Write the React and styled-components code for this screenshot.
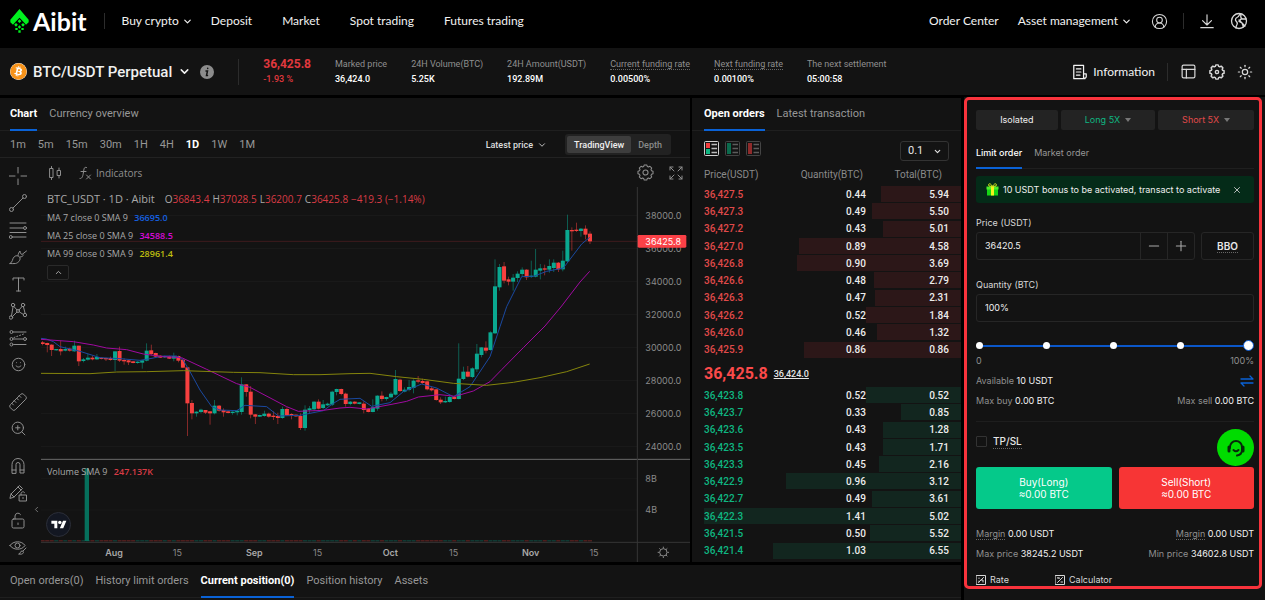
import React, { useState } from 'react';
import styled, { createGlobalStyle, css } from 'styled-components';
import {
  ChevronDown,
  ChevronUp,
  ChevronLeft,
  CircleUserRound,
  Minus,
  PanelsTopLeft,
  Plus,
  Ruler,
  Smile,
  Sun,
  X,
  ZoomIn,
} from 'lucide-react';
import { FaBitcoin } from 'react-icons/fa';

const GlobalStyle = createGlobalStyle`
  * {
    box-sizing: border-box;
  }
  body {
    margin: 0;
    background: #000;
    color: #e6e6e6;
    font: 11px/14px Roboto, "Liberation Sans", sans-serif;
    overflow: hidden;
  }
  button, input, select {
    font: inherit;
    color: inherit;
    background: none;
    border: 0;
    margin: 0;
    padding: 0;
  }
  button {
    cursor: pointer;
  }
  a {
    color: inherit;
    text-decoration: none;
  }
  svg {
    display: block;
    flex: none;
  }
`;

/* ---------- data ---------- */

const TICKER = [
  { label: 'Marked price', value: '36,424.0' },
  { label: '24H Volume(BTC)', value: '5.25K' },
  { label: '24H Amount(USDT)', value: '192.89M' },
  { label: 'Current funding rate', value: '0.00500%', hint: true },
  { label: 'Next funding rate', value: '0.00100%', hint: true },
  { label: 'The next settlement', value: '05:00:58' },
];

const INTERVALS = ['1m', '5m', '15m', '30m', '1H', '4H', '1D', '1W', '1M'];

const ASKS = [
  ['36,427.5', '0.44', '5.94'],
  ['36,427.3', '0.49', '5.50'],
  ['36,427.2', '0.43', '5.01'],
  ['36,427.0', '0.89', '4.58'],
  ['36,426.8', '0.90', '3.69'],
  ['36,426.6', '0.48', '2.79'],
  ['36,426.3', '0.47', '2.31'],
  ['36,426.2', '0.52', '1.84'],
  ['36,426.0', '0.46', '1.32'],
  ['36,425.9', '0.86', '0.86'],
];

const BIDS = [
  ['36,423.8', '0.52', '0.52'],
  ['36,423.7', '0.33', '0.85'],
  ['36,423.6', '0.43', '1.28'],
  ['36,423.5', '0.43', '1.71'],
  ['36,423.3', '0.45', '2.16'],
  ['36,422.9', '0.96', '3.12'],
  ['36,422.7', '0.49', '3.61'],
  ['36,422.3', '1.41', '5.02'],
  ['36,421.5', '0.50', '5.52'],
  ['36,421.4', '1.03', '6.55'],
];

const MAX_QTY = 1.41;

// one entry a day: direction, body top, body bottom, wick top, wick bottom
const CANDLES = `
r428,432,423,436 r430,435,428,457 r435,450,433,468 g448,450,447,452 r448,454,422,466 g448,452,440,454
r447,452,443,455 g438,454,422,455 r438,484,437,498 g479,483,474,487 g474,479,462,482 r474,478,468,481
g472,478,462,480 r474,477,472,478 r475,478,473,483 r475,480,470,482 g455,480,454,513 r454,482,440,486
r481,483,475,494 r482,487,480,495 r485,489,483,490 g486,489,484,491 g482,488,480,506 g453,482,430,484
r452,462,434,466 r460,470,458,473 r468,473,466,474 g469,472,467,474 r470,476,467,477 g469,476,458,484
r469,482,467,487 r480,503,478,504 r503,610,502,708 r610,640,600,658 g636,640,634,650 g630,636,626,640
r631,638,630,642 r635,640,633,674 g618,640,600,643 r618,632,615,635 r631,637,625,650 r635,639,632,640
g636,639,634,644 g633,637,630,646 g554,636,532,644 r554,576,552,590 r576,644,558,655 r644,650,642,672
g646,650,644,651 g642,648,632,650 r642,650,638,653 r648,651,634,660 r649,654,638,672 g628,654,620,656
r628,646,622,648 r643,646,640,658 r645,649,643,651 r649,684,640,690 g630,684,616,692 g626,630,618,640
g606,628,604,634 r606,626,598,628 g614,624,600,628 g612,616,608,618 g576,614,572,618 g568,576,566,586
r568,582,566,586 r582,612,578,620 g606,612,603,616 r606,611,604,613 g608,612,607,613 r612,630,604,640
r627,636,624,637 g623,636,598,637 g588,626,586,632 r588,597,574,604 g592,597,590,602 g582,592,576,594
g538,584,510,586 r540,573,536,576 g570,575,562,577 g562,570,540,574 g543,564,538,580 r542,545,528,550
r544,549,536,552 r545,568,542,571 r566,571,560,574 r569,600,566,602 r600,607,592,612 g604,607,590,609
g592,606,586,608 r592,597,589,598 g537,597,430,598 g516,537,500,540 r516,530,498,532 g506,531,502,534
g462,508,432,516 g443,465,442,472 r444,452,424,460 g398,450,394,452 g260,400,178,402 g202,262,192,272
r200,242,186,250 r239,245,230,256 g234,245,222,272 g222,234,214,246 g210,222,202,230 r210,232,208,240
g228,231,182,234 g210,230,147,232 g206,212,192,238 r206,209,194,226 g199,209,178,218 g189,204,178,216
r189,208,186,216 g183,208,152,214 g91,184,44,186 r91,93,82,152 r90,93,68,96 g87,93,84,110
r87,104,76,118 r102,124,94,132`
  .trim()
  .split(/\s+/)
  .map((item) => ({ up: item[0] === 'g', v: item.slice(1).split(',').map(Number) }));

const MA7 =
  '0,415 16,417 37,425 57,440 117,454 177,473 237,476 297,481 327,476 367,468 407,468 425,478 447,515 477,570 512,620 537,630 587,632 612,616 677,620 712,648 777,646 847,632 877,610 897,598 957,595 992,619 1047,608 1087,575 1142,552 1187,564 1237,590 1287,560 1347,470 1377,380 1397,320 1442,230 1477,229 1517,214 1567,204 1587,178 1622,132 1646,112';
const MA25 =
  '0,418 97,425 157,435 197,444 257,449 307,462 367,470 422,473 497,508 587,551 627,562 737,620 772,634 847,631 897,624 927,622 977,627 1047,614 1097,604 1132,591 1197,584 1242,589 1297,573 1347,545 1382,509 1447,443 1512,378 1562,318 1617,246 1646,214';
const MA99 =
  '0,520 147,521 227,516 317,515 427,512 577,517 657,518 757,524 837,524 927,521 987,520 1067,530 1147,538 1237,550 1337,556 1417,547 1497,533 1577,515 1646,492';

const PRICE_TICKS = [38000, 36000, 34000, 32000, 30000, 28000, 26000, 24000];
const TIME_TICKS = [
  ['Aug', 219, true],
  ['15', 409],
  ['Sep', 640, true],
  ['15', 830],
  ['Oct', 1048, true],
  ['15', 1238],
  ['Nov', 1469, true],
  ['15', 1659],
];

/* ---------- header ---------- */

const Header = styled.header`
  display: flex;
  align-items: center;
  height: 42px;
  padding: 0 17px 0 10px;
  font: 12px/16px Lato, "Liberation Sans", sans-serif;
  color: #f2f2f2;
`;

const Brand = styled.a`
  display: flex;
  align-items: center;
  gap: 4px;
  font-size: 25px;
  line-height: 24px;
  font-weight: 700;
  color: #fff;
`;

const Divider = styled.span`
  width: 1px;
  height: ${(p) => p.$h || 16}px;
  margin: 0 ${(p) => p.$gap || 16}px;
  background: #2c2c2c;
`;

const Nav = styled.nav`
  display: flex;
  align-items: center;
  gap: ${(p) => p.$gap}px;
`;

const NavLink = styled.a`
  display: flex;
  align-items: center;
  gap: 3px;
  margin-right: ${(p) => (p.$menu ? -12 : 0)}px;
  white-space: nowrap;
`;

const Spacer = styled.span`
  flex: 1;
`;

const IconButton = styled.button`
  display: flex;
  align-items: center;
  justify-content: center;
  color: ${(p) => p.$color || '#d8d8d8'};
`;

const Icons = styled.div`
  display: flex;
  align-items: center;
  gap: ${(p) => p.$gap}px;
`;

/* ---------- ticker ---------- */

const Ticker = styled.section`
  display: flex;
  align-items: center;
  height: 47px;
  margin: 6px 0 2px;
  padding: 0 12px 0 10px;
  background: #131313;
`;

const Pair = styled.button`
  display: flex;
  align-items: center;
  gap: 6px;
  margin-right: 9px;
  font-size: 15px;
  line-height: 18px;
  font-weight: 500;
  color: #f0f0f0;
  white-space: nowrap;
`;

const Stats = styled.dl`
  display: flex;
  gap: 24px;
  margin: 0;
`;

const Stat = styled.div`
  font-size: 9px;
  line-height: 15px;
  white-space: nowrap;

  dt {
    color: #8f8f8f;
  }
  dt span {
    ${(p) => p.$hint && css`border-bottom: 1px dotted #666;`}
  }
  dd {
    margin: 0;
    font-weight: 500;
    color: #fff;
  }
`;

const LastPrice = styled(Stat)`
  dt {
    font-size: 12px;
    font-weight: 700;
  }
  dt,
  dd {
    color: #e0383e;
  }
`;

const InfoLink = styled.a`
  display: flex;
  align-items: center;
  gap: 5px;
  font: 12px/16px Lato, "Liberation Sans", sans-serif;
  color: #f2f2f2;
`;

/* ---------- page grid ---------- */

const Main = styled.main`
  display: grid;
  grid-template-columns: minmax(0, 1fr) 301px;
  gap: 3px;
`;

const Left = styled.div`
  display: grid;
  grid-template-columns: minmax(0, 1fr) 269px;
  gap: 3px 2px;
  padding-top: 1px;
`;

const Panel = styled.section`
  background: #131313;
  min-width: 0;
`;

const Tabs = styled.div`
  display: flex;
  gap: 12px;
  height: 33px;
  padding: 0 ${(p) => p.$pad}px;
  border-bottom: 1px solid #1f1f1f;
`;

const FormTabs = styled(Tabs)`
  height: 39px;
  padding: 8px 0 0;
`;

const Tab = styled.button`
  margin-bottom: -1px;
  padding: 0;
  border-bottom: 2px solid ${(p) => (p.$on ? '#0a62d6' : 'transparent')};
  color: ${(p) => (p.$on ? '#fff' : '#979797')};
  font-weight: ${(p) => (p.$on ? 700 : 400)};
  white-space: nowrap;
`;

const FormTab = styled(Tab)`
  font-weight: ${(p) => (p.$on ? 500 : 400)};
`;

/* ---------- chart ---------- */

const IntervalBar = styled.div`
  display: flex;
  align-items: center;
  gap: 12px;
  height: 27px;
  padding: 1px 19px 0 10px;
  border-bottom: 1px solid #222;
`;

const Interval = styled.button`
  color: ${(p) => (p.$on ? '#fff' : '#979797')};
  font-weight: ${(p) => (p.$on ? 700 : 400)};
`;

const PriceKind = styled.button`
  display: flex;
  align-items: center;
  gap: 4px;
  margin-right: 6px;
  font-size: 9px;
  font-weight: 500;
  color: #ddd;
`;

const Segments = styled.div`
  display: flex;
  padding: 2px;
  border-radius: 3px;
  background: #222;
`;

const Segment = styled.button`
  height: 17px;
  padding: 0 7px;
  border-radius: 2px;
  font-size: 9px;
  font-weight: 500;
  background: ${(p) => (p.$on ? '#3d3d3d' : 'none')};
  color: ${(p) => (p.$on ? '#f0f0f0' : '#8a8a8a')};
`;

const Workspace = styled.div`
  display: grid;
  grid-template-columns: 41px minmax(0, 1fr);
`;

const Tools = styled.div`
  display: flex;
  flex-direction: column;
  padding: 4px 4px 0 4px;
`;

const Tool = styled(IconButton)`
  height: 27px;
  width: 28px;
  margin-top: ${(p) => (p.$gap ? 10 : 0)}px;
  color: #8f8f8f;
`;

const Flip = styled.span`
  transform: scaleX(-1);
`;

const ChartHead = styled.div`
  display: flex;
  align-items: center;
  gap: 15px;
  height: 29px;
  padding: 0 7px 0 8px;
  color: #8f8f8f;
`;

const IndicatorButton = styled.button`
  display: flex;
  align-items: center;
  gap: 4px;
  font: 10px/14px "Open Sans", sans-serif;
`;

const Plot = styled.div`
  position: relative;

  > svg {
    width: 100%;
    height: auto;
    font-family: Inter, "Liberation Sans", sans-serif;
  }
`;

const Legend = styled.div`
  position: absolute;
  left: 6px;
  top: 3px;
  font: 9px/18px "Open Sans", "Noto Sans", sans-serif;
  color: #a8a8a8;
  white-space: nowrap;

  h2 {
    display: inline;
    margin: 0 10px 0 0;
    font-size: 11px;
    font-weight: 400;
  }
  p {
    margin: 0;
  }
`;

const VolumeLegend = styled(Legend)`
  top: 276px;
`;

const Value = styled.span`
  margin-left: 4px;
  font-weight: 600;
  color: ${(p) => p.$color};
`;

const Ohlc = styled.span`
  margin-right: 3px;
  font-size: 10px;

  b {
    font-weight: 400;
    color: #d93b45;
  }
`;

const Collapse = styled.button`
  display: flex;
  align-items: center;
  justify-content: center;
  width: 22px;
  height: 15px;
  margin-top: 2px;
  border: 1px solid #2a2a2a;
  border-radius: 2px;
`;

const TvMark = styled.a`
  position: absolute;
  left: 5px;
  bottom: 25px;
  display: flex;
  align-items: center;
  justify-content: center;
  width: 25px;
  height: 25px;
  border: 1px solid #2b2e38;
  border-radius: 50%;
  background: #131722;
`;

const Drawer = styled(IconButton)`
  position: absolute;
  left: -9px;
  bottom: 48px;
`;

/* ---------- order book ---------- */

const BookBar = styled.div`
  display: flex;
  align-items: flex-start;
  gap: 6px;
  padding: 10px 12px 3px;
`;

const SelectBox = styled.label`
  display: flex;
  align-items: center;
  width: 49px;
  height: 20px;
  padding: 0 6px 0 7px;
  border: 1px solid #333;
  border-radius: 3px;

  select {
    flex: 1;
    min-width: 0;
    appearance: none;
    outline: 0;
  }
`;

const BookTable = styled.table`
  width: calc(100% - 12px);
  height: ${(p) => p.$h}px;
  margin-left: 12px;
  border-collapse: collapse;
  table-layout: fixed;
  font-size: 10px;
  line-height: 12px;

  th,
  td {
    padding: 0;
    text-align: right;
  }
  th {
    height: 22px;
    font-weight: 400;
    color: #8a8a8a;
  }
  td {
    font-weight: 500;
    color: #ececec;
  }
  th:first-child,
  td:first-child {
    text-align: left;
  }
  td:first-child {
    color: ${(p) => (p.$side === 'ask' ? '#e04a4a' : '#0fb681')};
  }
  th:nth-child(2) {
    padding-right: 3px;
  }
  th:last-child {
    padding-right: 19px;
  }
  td:last-child {
    padding-right: 12px;
  }
  tbody tr {
    background-repeat: no-repeat;
    background-position: right top;
    background-image: linear-gradient(
      ${(p) => (p.$side === 'ask' ? '#2c1718, #2c1718' : '#12261f, #12261f')}
    );
  }
`;

const MidPrice = styled.div`
  display: flex;
  align-items: center;
  gap: 6px;
  height: 28px;
  padding: 2px 12px 0;
  font-size: 9px;
  font-weight: 500;

  strong {
    font-size: 16px;
    color: #fb4a4a;
  }
  u {
    text-underline-offset: 1px;
  }
`;

/* ---------- order form ---------- */

const FormColumn = styled.div`
  background: #131313;
`;

const OrderForm = styled.form`
  margin-right: 3px;
  padding: 10px 5px 0 9px;
  height: 492px;
  border: 3px solid #f8333c;
  border-radius: 5px;
  font: 9px/14px Inter, "Liberation Sans", sans-serif;
`;

const Modes = styled.div`
  display: grid;
  grid-template-columns: 82fr 95fr 96fr;
  gap: 3px;
`;

const Mode = styled.button`
  display: flex;
  align-items: center;
  justify-content: center;
  gap: 5px;
  height: 20px;
  border-radius: 2px;
  background: #232323;
  color: ${(p) => p.$color};
`;

const Caret = styled.i`
  border: 3px solid transparent;
  border-top: 4px solid #777;
  border-bottom: 0;
`;

const Banner = styled.div`
  display: flex;
  align-items: center;
  gap: 4px;
  height: 27px;
  margin: 7px 0 13px;
  padding: 0 12px 0 10px;
  border-radius: 3px;
  background: #042b18;
  color: #eee;
  white-space: nowrap;
`;

const FieldLabel = styled.label`
  display: block;
  margin-bottom: 2px;
  color: #d8d8d8;
`;

const FieldRow = styled.div`
  display: flex;
  gap: 6px;
  margin-bottom: 18px;
`;

const Field = styled.div`
  display: flex;
  flex: 1;
  min-width: 0;
  height: 28px;
  border: 1px solid #262626;
  border-radius: 3px;

  input {
    flex: 1;
    min-width: 0;
    padding: 0 8px;
    outline: 0;
    color: #eee;
  }
`;

const Step = styled(IconButton)`
  width: 27px;
  border-left: 1px solid #262626;
  color: #aaa;
`;

const Bbo = styled.button`
  width: 53px;
  border: 1px solid #262626;
  border-radius: 3px;
  font-size: 10px;
  font-weight: 600;
`;

const Dotted = styled.span`
  border-bottom: 1px dotted #666;
`;

const SliderBox = styled.div`
  position: relative;
  height: 11px;

  input {
    display: block;
    width: 100%;
    height: 11px;
    appearance: none;
    background: linear-gradient(#0b57c9, #0b57c9) center / calc(100% - 6px) 2px no-repeat;
  }
  input::-webkit-slider-thumb {
    position: relative;
    z-index: 2;
    appearance: none;
    width: 11px;
    height: 11px;
    border: 1px solid #0b57c9;
    border-radius: 50%;
    background: #fff;
  }
`;

const Marks = styled.div`
  position: absolute;
  inset: 0 3px 0 0;
  display: flex;
  align-items: center;
  justify-content: space-between;
  pointer-events: none;

  i {
    width: 7px;
    height: 7px;
    border-radius: 50%;
    background: #fff;
  }
`;

const Line = styled.div`
  display: flex;
  align-items: center;
  justify-content: space-between;
  height: 20px;
  color: #8f8f8f;
  white-space: nowrap;

  b {
    font-weight: 400;
    color: #f2f2f2;
  }
`;

const Check = styled.label`
  display: flex;
  align-items: center;
  gap: 6px;
  height: 40px;
  margin-top: 10px;
  border-top: 1px solid #1e1e1e;
  font-size: 10px;
  font-weight: 500;

  input {
    appearance: none;
    width: 11px;
    height: 11px;
    border: 1px solid #333;
    border-radius: 1px;
  }
`;

const Actions = styled.div`
  display: grid;
  grid-template-columns: 1fr 1fr;
  gap: 7px;
  margin: 6px 0 15px;
`;

const Action = styled.button`
  height: 42px;
  border-radius: 3px;
  background: ${(p) => p.$bg};
  color: #fff;
  font-size: 10px;
  line-height: 12px;
`;

const FootLinks = styled.div`
  display: grid;
  grid-template-columns: 79px 1fr;
  margin-top: 9px;
  color: #d8d8d8;

  a {
    display: flex;
    align-items: center;
    gap: 4px;
  }
`;

const Support = styled.button`
  position: fixed;
  right: 11px;
  bottom: 134px;
  display: flex;
  align-items: center;
  justify-content: center;
  width: 37px;
  height: 37px;
  border-radius: 50%;
  background: #00dc00;
`;

const Positions = styled(Panel)`
  grid-column: 1 / -1;
  height: 60px;
`;

/* ---------- icons ---------- */

function Glyph({ size = 18, sw = 1, children, box = 18 }) {
  return (
    <svg
      width={size}
      height={size}
      viewBox={`0 0 ${box} ${box}`}
      fill="none"
      stroke="currentColor"
      strokeWidth={sw}
      strokeLinecap="round"
      strokeLinejoin="round"
      aria-hidden="true"
    >
      {children}
    </svg>
  );
}

function Logo() {
  return (
    <svg width="19" height="24" viewBox="0 0 57 72" fill="#00f01e" aria-hidden="true">
      <path d="M28.500 0 56 32v8l-8 7-8-9-11.500-12L17 38l-8 9-8-7v-8z" />
      <path d="M28.500 31l5.500 5.500-5.500 5.500-5.500-5.500zM18 42l5.500 5.500-5.500 5.500-5.500-5.500zM39 42l5.500 5.500-5.500 5.500-5.500-5.500zM28.500 49l5 5-5 5-5-5z" />
      <path d="M16 57h7v6h-7zM34 57h7v6h-7zM25 64h7v7h-7z" />
    </svg>
  );
}

const TOOLS = [
  { name: 'Cross', icon: <Glyph><path d="M9 0v6M9 12v6M0 9h6M12 9h6" /></Glyph> },
  { name: 'Trend line', icon: <Glyph><circle cx="2.500" cy="15.500" r="2" /><circle cx="15.500" cy="2.500" r="2" /><path d="M4 14 14 4" /></Glyph> },
  { name: 'Fib retracement', icon: <Glyph><path d="M1 2h16M1 7h13M1 11.500h16M4 16h13" /><circle cx="16" cy="7" r="1.500" /><circle cx="1.800" cy="16" r="1.500" /></Glyph> },
  { name: 'Brush', icon: <Glyph><path d="M1 15.500c3-1 2-5 4.500-7 2-1.500 5-.5 5.500 1.500.5 2.500-2 5-4.500 5.500-2 .3-4 0-5.500 0z" /><path d="M9 7.500c0-2 1-3 2-4.500 0 1.500.5 3 2 3.500L17.500 3M11 9c2 0 3-1 3.500-2" /></Glyph> },
  { name: 'Text', icon: <Glyph><path d="M4 5V3h11v2M9.500 3v13M7.500 16h4" /></Glyph> },
  { name: 'Patterns', icon: <Glyph><circle cx="4" cy="3" r="1.700" /><circle cx="14" cy="3" r="1.700" /><circle cx="2" cy="15.500" r="1.700" /><circle cx="16" cy="13" r="1.700" /><circle cx="9" cy="9" r="1.500" /><path d="M4 5 2.500 14M5 4.500 8 8M13 4.500 10 8M14.500 5 16 11M3.500 14.500 8 10M10.500 10l4 2.500" /></Glyph> },
  { name: 'Position', icon: <Glyph><circle cx="2.500" cy="3" r="1.500" /><path d="M5 3h12M5 10h9M5 15.500h12" /><circle cx="2.500" cy="10" r="1.500" /><circle cx="16" cy="10" r="1.500" /><circle cx="2.500" cy="15.500" r="1.500" /><path d="M5 8.500l11-4" strokeDasharray="1 2" /></Glyph> },
  { name: 'Icons', icon: <Smile size={15} strokeWidth={1.6} /> },
  { name: 'Measure', gap: true, icon: <Flip><Ruler size={20} strokeWidth={1.2} /></Flip> },
  { name: 'Zoom in', icon: <ZoomIn size={17} strokeWidth={1.4} /> },
  { name: 'Magnet', gap: true, icon: <Glyph><path d="M3 16V7.500a6 6 0 0 1 12 0V16h-4V7.500a2 2 0 0 0-4 0V16zM3 13h4M11 13h4" /></Glyph> },
  { name: 'Stay in drawing mode', icon: <Glyph><path d="M1 14l1-4 8.500-8.500 3 3L5 13zM2 10l3 3M9 3l3 3" /><path d="M10.500 11h7v6h-7zM12 11V9.500a2 2 0 0 1 3.500-1M14 13.500v1" /></Glyph> },
  { name: 'Lock', icon: <Glyph><rect x="3" y="8" width="12" height="9" rx="1.500" /><path d="M6 8V5a3 3 0 0 1 5.500-1.500M9 12v1.500" /></Glyph> },
  { name: 'Hide', icon: <Glyph><path d="M1 7.500C4 2.500 13 2.500 16 7.500 13 12.500 4 12.500 1 7.500z" /><circle cx="8.500" cy="7.500" r="2.500" /><path d="M10 16c2-.5 1-3 3-3s2 2.500 0 3zM14 13l3-3" /></Glyph> },
];

function Cog({ size, teeth = 8, r = 3, sw = 1.2 }) {
  const pts = [];
  for (let i = 0; i < teeth; i++) {
    [[-0.3, 7.3], [-0.17, 9], [0.17, 9], [0.3, 7.3]].forEach(([da, rad]) => {
      const a = (i / teeth) * Math.PI * 2 + da;
      pts.push(`${(10 + Math.sin(a) * rad).toFixed(2)},${(10 - Math.cos(a) * rad).toFixed(2)}`);
    });
  }
  return (
    <Glyph size={size} box={20} sw={sw}>
      <polygon points={pts.join(' ')} />
      <circle cx="10" cy="10" r={r} />
    </Glyph>
  );
}

function BookIcon({ left, on }) {
  return (
    <svg width="15" height="15" viewBox="0 0 15 15" aria-hidden="true">
      <rect x=".5" y=".5" width="14" height="14" rx="1" fill="none" stroke={on ? '#d0d0d0' : '#444'} />
      <rect x="2" y="2" width="4" height="5" fill={left[0]} />
      <rect x="2" y={on ? 8 : 7} width="4" height={on ? 5 : 6} fill={left[1]} />
      <path d="M7.500 3.500H13M7.500 7.500H13M7.500 11.500H13" stroke={on ? '#bbb' : '#5c5c5c'} strokeWidth="1.500" />
    </svg>
  );
}

function Gift() {
  return (
    <svg width="13" height="13" viewBox="0 0 26 26" aria-hidden="true">
      <path d="M2 12h22v13H2z" fill="#16d416" />
      <path d="M1 7h24v6H1z" fill="#4cf02a" />
      <path d="M10 7h6v18h-6z" fill="#f2f21c" />
      <path d="M13 7C9-1 3 1 6 6zM13 7c4-8 10-6 7-1z" fill="none" stroke="#d8f21c" strokeWidth="2" />
    </svg>
  );
}

/* ---------- sections ---------- */

function TopBar() {
  return (
    <Header>
      <Brand href="#">
        <Logo />
        Aibit
      </Brand>
      <Divider $gap={17} />
      <Nav $gap={30}>
        <NavLink href="#" $menu>Buy crypto <ChevronDown size={11} strokeWidth={2.6} /></NavLink>
        <NavLink href="#">Deposit</NavLink>
        <NavLink href="#">Market</NavLink>
        <NavLink href="#">Spot trading</NavLink>
        <NavLink href="#">Futures trading</NavLink>
      </Nav>
      <Spacer />
      <Nav $gap={19}>
        <NavLink href="#">Order Center</NavLink>
        <NavLink href="#">Asset management <ChevronDown size={11} strokeWidth={2.6} /></NavLink>
        <IconButton type="button" aria-label="Account"><CircleUserRound size={17} strokeWidth={1.5} /></IconButton>
      </Nav>
      <Divider $gap={15} />
      <Icons $gap={15}>
        <IconButton type="button" aria-label="Download">
          <Glyph size={16} sw={1.3}><path d="M9 2v11M4 8.500l5 5 5-5M2 16.500h14" /></Glyph>
        </IconButton>
        <IconButton type="button" aria-label="Language">
          <Glyph size={18} sw={1.3}><circle cx="9" cy="9" r="7.500" /><path d="M10 2c-1 2-1.500 3-3 3.500S5 8 6 9s2 2 1 3.500-1 2-1 3.500M11 2.500c-.5 2-.5 3.500 1 4M16 7l-5 0-2 2.500 3 1.500 1.500 4M9 8l6 6" /></Glyph>
        </IconButton>
      </Icons>
    </Header>
  );
}

function TickerBar() {
  return (
    <Ticker>
      <Pair type="button">
        <FaBitcoin size={17} color="#f7931a" style={{ background: '#fff', borderRadius: '50%' }} />
        BTC/USDT Perpetual
        <ChevronDown size={13} strokeWidth={2.8} />
      </Pair>
      <svg width="14" height="14" viewBox="0 0 14 14" aria-label="Contract info">
        <circle cx="7" cy="7" r="7" fill="#8c8c8c" />
        <path d="M6 6h1.500l-1 4.500h1M7.700 3.300v.3" stroke="#131313" strokeWidth="1.500" fill="none" strokeLinecap="round" />
      </svg>
      <Divider $h={26} $gap={24} />
      <Stats>
        <LastPrice>
          <dt>36,425.8</dt>
          <dd>-1.93 %</dd>
        </LastPrice>
        {TICKER.map((s) => (
          <Stat key={s.label} $hint={s.hint}>
            <dt><span>{s.label}</span></dt>
            <dd>{s.value}</dd>
          </Stat>
        ))}
      </Stats>
      <Spacer />
      <InfoLink href="#">
        <Glyph size={16} sw={1.4}><path d="M13 11V1.500H2v15h12.500M5 5.500h5M5 9h5M5 12.500h4M13 11h3v3.500a1.800 1.800 0 0 1-3 1z" /></Glyph>
        Information
      </InfoLink>
      <Divider $h={18} $gap={12} />
      <Icons $gap={12}>
        <IconButton type="button" aria-label="Layout"><PanelsTopLeft size={17} strokeWidth={1.7} /></IconButton>
        <IconButton type="button" aria-label="Settings"><Cog size={16} teeth={8} r={2} sw={1.8} /></IconButton>
        <IconButton type="button" aria-label="Theme"><Sun size={16} strokeWidth={1.8} /></IconButton>
      </Icons>
    </Ticker>
  );
}

function CandleChart() {
  return (
    <svg viewBox="0 0 1947 1125" role="img" aria-label="BTC_USDT daily candles">
      <g transform="translate(0 39)">
        {PRICE_TICKS.map((p, i) => (
          <g key={p}>
            <path d={`M0 ${46 + i * 99}H1789`} stroke="#1b1b1b" strokeWidth="3" />
            <text x="1813" y={56 + i * 99} fontSize="27" fill="#8a8a8a">{p}.0</text>
          </g>
        ))}
        {[['8B', 836], ['4B', 930]].map(([label, y]) => (
          <g key={label}>
            <path d={`M0 ${y}H1789`} stroke="#181818" strokeWidth="3" />
            <text x="1813" y={y + 10} fontSize="27" fill="#8a8a8a">{label}</text>
          </g>
        ))}
        <path d="M0 124H1789" stroke="#3f1b1e" strokeWidth="3" />
        {CANDLES.map(({ up, v }, i) => {
          const x = 5 + i * 13.57;
          return (
            <g key={i} fill={up ? '#0aa890' : '#f7403f'}>
              <rect x={x - 1} y={v[2]} width="2" height={v[3] - v[2]} opacity=".75" />
              <rect x={x - 6} y={v[0] - 1} width="12" height={Math.max(v[1] - v[0], 3) + 1} />
              <rect x={x - 6} y="1021" width="12" height="3" opacity=".4" />
            </g>
          );
        })}
        <rect x="131" y="805" width="13" height="218" fill="#06705c" />
        <g fill="none" strokeWidth="3">
          <polyline points={MA7} stroke="#1a49a0" />
          <polyline points={MA25} stroke="#a00aa0" />
          <polyline points={MA99} stroke="#85850c" />
        </g>
        <path d="M0 778H1947" stroke="#6a6a6a" strokeWidth="3" />
        <path d="M0 1027H1947M1789-39V1086" stroke="#363636" strokeWidth="3" />
        <rect x="1790" y="105" width="146" height="38" rx="4" fill="#fb4147" />
        <text x="1813" y="134" fontSize="27" fill="#fff">36425.8</text>
        {TIME_TICKS.map(([label, x, bold]) => (
          <text key={x} x={x} y="1068" fontSize="27" textAnchor="middle" fill={bold ? '#a8a8a8' : '#8a8a8a'} fontWeight={bold ? 600 : 400}>
            {label}
          </text>
        ))}
        <g transform="translate(1867 1057)" stroke="#8a8a8a" strokeWidth="3" fill="none">
          <circle r="11" />
          <path d="M0-17v5M0 17v-5M17 0h-5M-17 0h5M12-12l-4 4M-12-12l4 4M12 12l-4-4M-12 12l4-4" />
        </g>
      </g>
    </svg>
  );
}

function ChartPanel() {
  const [interval, setInterval] = useState('1D');
  return (
    <Panel>
      <Tabs $pad={10}>
        <Tab type="button" $on>Chart</Tab>
        <Tab type="button">Currency overview</Tab>
      </Tabs>
      <IntervalBar>
        {INTERVALS.map((n) => (
          <Interval key={n} type="button" $on={n === interval} onClick={() => setInterval(n)}>{n}</Interval>
        ))}
        <Spacer />
        <PriceKind type="button">Latest price <ChevronDown size={10} strokeWidth={2} /></PriceKind>
        <Segments>
          <Segment type="button" $on>TradingView</Segment>
          <Segment type="button">Depth</Segment>
        </Segments>
      </IntervalBar>
      <Workspace>
        <Tools>
          {TOOLS.map((t) => (
            <Tool key={t.name} type="button" aria-label={t.name} $gap={t.gap}>{t.icon}</Tool>
          ))}
        </Tools>
        <div>
          <ChartHead>
            <IconButton type="button" aria-label="Chart type" $color="#8f8f8f">
              <Glyph size={14} box={14}><path d="M1 2.500h3v9H1zM2.500.5v2M2.500 11.500v2M8.500 4.500h3v5h-3zM10 2v2.500M10 9.500V12" /></Glyph>
            </IconButton>
            <IndicatorButton type="button">
              <Glyph size={14} box={14}><path d="M8.500 1.500C6 .5 6 3 5.500 6S4.500 13 2 12.500M3 5.500h5M8.500 9l4 4M12.500 9l-4 4" /></Glyph>
              Indicators
            </IndicatorButton>
            <Spacer />
            <IconButton type="button" aria-label="Chart settings" $color="#8f8f8f"><Cog size={17} /></IconButton>
            <IconButton type="button" aria-label="Full screen" $color="#8f8f8f">
              <Glyph size={14} box={14}><path d="M1 4V1h3M10 1h3v3M13 10v3h-3M4 13H1v-3M1 1l4 4M13 1 9 5M13 13 9 9M1 13l4-4" /></Glyph>
            </IconButton>
          </ChartHead>
          <Plot>
            <CandleChart />
            <Legend>
              <h2>BTC_USDT · 1D · Aibit</h2>
              <Ohlc>O<b>36843.4</b></Ohlc>
              <Ohlc>H<b>37028.5</b></Ohlc>
              <Ohlc>L<b>36200.7</b></Ohlc>
              <Ohlc>C<b>36425.8</b></Ohlc>
              <Ohlc><b>−419.3 (−1.14%)</b></Ohlc>
              <p>MA 7 close 0 SMA 9 <Value $color="#1560e0">36695.0</Value></p>
              <p>MA 25 close 0 SMA 9 <Value $color="#d60ad6">34588.5</Value></p>
              <p>MA 99 close 0 SMA 9 <Value $color="#bdbd0f">28961.4</Value></p>
              <Collapse type="button" aria-label="Collapse legend"><ChevronUp size={9} strokeWidth={2.6} /></Collapse>
            </Legend>
            <VolumeLegend>Volume SMA 9 <Value $color="#d93b45">247.137K</Value></VolumeLegend>
            <TvMark href="#" aria-label="TradingView">
              <svg width="16" height="11" viewBox="0 0 36 26" fill="#fff">
                <path d="M14 22H7V11H0V4h14zM28 22h-8l7.500-18h8z" />
                <circle cx="20" cy="8" r="4" />
              </svg>
            </TvMark>
            <Drawer type="button" aria-label="Hide tools" $color="#8f8f8f"><ChevronLeft size={9} strokeWidth={2} /></Drawer>
          </Plot>
        </div>
      </Workspace>
    </Panel>
  );
}

function BookRows({ rows }) {
  return (
    <tbody>
      {rows.map(([price, qty, total]) => (
        <tr key={price} style={{ backgroundSize: `${(qty / MAX_QTY) * 100}% calc(100% - 1px)` }}>
          <td>{price}</td>
          <td>{qty}</td>
          <td>{total}</td>
        </tr>
      ))}
    </tbody>
  );
}

function BookCols() {
  return (
    <colgroup>
      <col />
      <col style={{ width: '32%' }} />
      <col style={{ width: '37%' }} />
    </colgroup>
  );
}

function OrderBook() {
  return (
    <Panel>
      <Tabs $pad={12}>
        <Tab type="button" $on>Open orders</Tab>
        <Tab type="button">Latest transaction</Tab>
      </Tabs>
      <BookBar>
        <IconButton type="button" aria-label="Both sides"><BookIcon on left={['#f23c3c', '#0fb681']} /></IconButton>
        <IconButton type="button" aria-label="Bids only"><BookIcon left={['#0b6b4d', '#0b6b4d']} /></IconButton>
        <IconButton type="button" aria-label="Asks only"><BookIcon left={['#8f2b2b', '#8f2b2b']} /></IconButton>
        <Spacer />
        <SelectBox>
          <select aria-label="Price step" defaultValue="0.1">
            <option>0.1</option>
            <option>1</option>
            <option>10</option>
          </select>
          <ChevronDown size={9} strokeWidth={3} />
        </SelectBox>
      </BookBar>
      <BookTable $h={195} $side="ask">
        <BookCols />
        <thead>
          <tr>
            <th>Price(USDT)</th>
            <th>Quantity(BTC)</th>
            <th>Total(BTC)</th>
          </tr>
        </thead>
        <BookRows rows={ASKS} />
      </BookTable>
      <MidPrice>
        <strong>36,425.8</strong>
        <u>36,424.0</u>
      </MidPrice>
      <BookTable $h={173} $side="bid">
        <BookCols />
        <BookRows rows={BIDS} />
      </BookTable>
    </Panel>
  );
}

function OrderPanel() {
  const [price, setPrice] = useState('36420.5');
  const [percent, setPercent] = useState(100);
  const step = (d) => setPrice((Number(price) + d).toFixed(1));

  return (
    <FormColumn>
      <OrderForm onSubmit={(e) => e.preventDefault()}>
        <Modes>
          <Mode type="button" $color="#eee">Isolated</Mode>
          <Mode type="button" $color="#0fb681">Long 5X <Caret /></Mode>
          <Mode type="button" $color="#e04a4a">Short 5X <Caret /></Mode>
        </Modes>
        <FormTabs>
          <FormTab type="button" $on>Limit order</FormTab>
          <FormTab type="button">Market order</FormTab>
        </FormTabs>
        <Banner>
          <Gift />
          10 USDT bonus to be activated, transact to activate
          <Spacer />
          <IconButton type="button" aria-label="Dismiss"><X size={10} strokeWidth={2} /></IconButton>
        </Banner>
        <FieldLabel htmlFor="price">Price (USDT)</FieldLabel>
        <FieldRow>
          <Field>
            <input id="price" value={price} onChange={(e) => setPrice(e.target.value)} />
            <Step type="button" aria-label="Decrease" onClick={() => step(-0.1)}><Minus size={16} strokeWidth={1.6} /></Step>
            <Step type="button" aria-label="Increase" onClick={() => step(0.1)}><Plus size={16} strokeWidth={1.6} /></Step>
          </Field>
          <Bbo type="button"><Dotted>BBO</Dotted></Bbo>
        </FieldRow>
        <FieldLabel htmlFor="quantity">Quantity (BTC)</FieldLabel>
        <FieldRow>
          <Field>
            <input id="quantity" value={`${percent}%`} onChange={(e) => setPercent(parseInt(e.target.value, 10) || 0)} />
          </Field>
        </FieldRow>
        <SliderBox>
          <Marks><i /><i /><i /><i /><i /></Marks>
          <input type="range" aria-label="Percent of balance" value={percent} onChange={(e) => setPercent(+e.target.value)} />
        </SliderBox>
        <Line>
          <span>0</span>
          <span>100%</span>
        </Line>
        <Line>
          <span>Available <b>10 USDT</b></span>
          <IconButton type="button" aria-label="Transfer" $color="#0a62d6">
            <Glyph size={14} box={14} sw={1.3}><path d="M1 5h12L10 2M13 9H1l3 3" /></Glyph>
          </IconButton>
        </Line>
        <Line>
          <span>Max buy <b>0.00 BTC</b></span>
          <span>Max sell <b>0.00 BTC</b></span>
        </Line>
        <Check>
          <input type="checkbox" />
          <Dotted>TP/SL</Dotted>
        </Check>
        <Actions>
          <Action type="submit" $bg="#05c98a">Buy(Long)<br />≈0.00 BTC</Action>
          <Action type="submit" $bg="#f73535">Sell(Short)<br />≈0.00 BTC</Action>
        </Actions>
        <Line>
          <span><Dotted>Margin</Dotted> <b>0.00 USDT</b></span>
          <span><Dotted>Margin</Dotted> <b>0.00 USDT</b></span>
        </Line>
        <Line>
          <span>Max price <b>38245.2 USDT</b></span>
          <span>Min price <b>34602.8 USDT</b></span>
        </Line>
        <FootLinks>
          <a href="#">
            <Glyph size={10} box={10}><rect x=".5" y=".5" width="9" height="9" /><path d="M2.500 7.500l5-5M3 3v.5M5 5h2v2M3 6v1" /></Glyph>
            Rate
          </a>
          <a href="#">
            <Glyph size={10} box={10}><rect x=".5" y=".5" width="9" height="9" /><path d="M2.500 7.500l5-5M2.500 3h2M6 7h1.500M3 2.500l1 1" /></Glyph>
            Calculator
          </a>
        </FootLinks>
      </OrderForm>
    </FormColumn>
  );
}

function App() {
  return (
    <>
      <GlobalStyle />
      <TopBar />
      <TickerBar />
      <Main>
        <Left>
          <ChartPanel />
          <OrderBook />
          <Positions>
            <Tabs $pad={10}>
              <Tab type="button">Open orders(0)</Tab>
              <Tab type="button">History limit orders</Tab>
              <Tab type="button" $on>Current position(0)</Tab>
              <Tab type="button">Position history</Tab>
              <Tab type="button">Assets</Tab>
            </Tabs>
          </Positions>
        </Left>
        <OrderPanel />
      </Main>
      <Support type="button" aria-label="Support">
        <svg width="20" height="20" viewBox="0 0 20 20" fill="none" stroke="#06280a" strokeWidth="2" strokeLinecap="round">
          <path d="M4 10V9a6 6 0 0 1 12 0v3c0 3-2 5-5 5.500M7.500 12c1.500 1.500 3.500 1.500 5 0" />
          <path d="M3 9v4M17 9v4" strokeWidth="3" />
        </svg>
      </Support>
    </>
  );
}

export default App;
